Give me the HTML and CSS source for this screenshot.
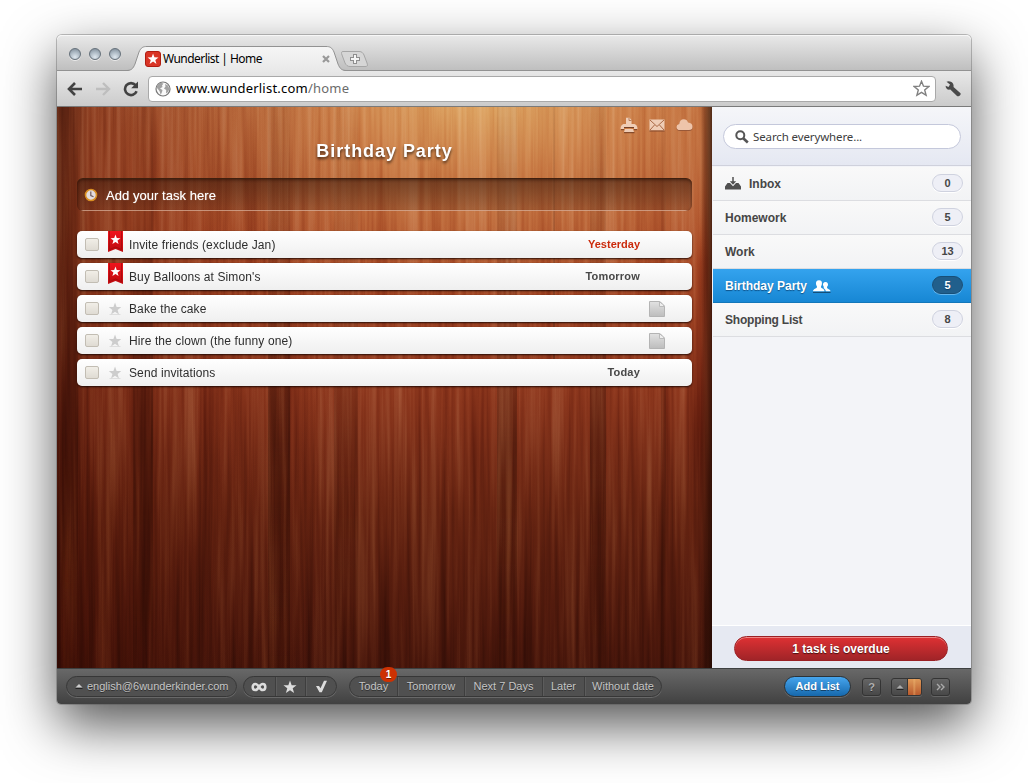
FILE: index.html
```html
<!DOCTYPE html>
<html lang="en">
<head>
<meta charset="utf-8">
<title>Wunderlist | Home</title>
<link rel="stylesheet" href="styles.css">
</head>
<body>
<svg class="defs" width="0" height="0" aria-hidden="true">
  <defs>
    <path id="star" d="M8 0.6 L9.9 5.9 L15.5 6.1 L11.1 9.5 L12.7 14.9 L8 11.7 L3.3 14.9 L4.9 9.5 L0.5 6.1 L6.1 5.9 Z"/>
    <linearGradient id="ribbonFill" x1="0" y1="0" x2="0" y2="1"><stop offset="0" stop-color="#f0141c"/><stop offset="1" stop-color="#bd0a0e"/></linearGradient>
    <linearGradient id="noteFill" x1="0" y1="0" x2="0" y2="1"><stop offset="0" stop-color="#e2e2e2"/><stop offset="1" stop-color="#bdbdbd"/></linearGradient>
    <linearGradient id="tabFill" x1="0" y1="0" x2="0" y2="1"><stop offset="0" stop-color="#f6f6f6"/><stop offset="1" stop-color="#e8e8e8"/></linearGradient>
    <linearGradient id="plankFade" gradientUnits="userSpaceOnUse" x1="0" y1="0" x2="0" y2="561"><stop offset="0" stop-color="#1c0400" stop-opacity=".1"/><stop offset=".25" stop-color="#1c0400" stop-opacity=".3"/><stop offset=".6" stop-color="#1c0400" stop-opacity=".9"/><stop offset="1" stop-color="#1c0400" stop-opacity=".4"/></linearGradient>
    <g id="ribbon">
      <path d="M0 0 H15 V21 L7.500 18 L0 21 Z" fill="url(#ribbonFill)"/>
      <path d="M1.500 0 V18.500 L7.500 16 L13.500 18.500 V0" fill="none" stroke="#98080a" stroke-opacity=".6" stroke-width="1"/>
      <use href="#star" transform="translate(2.200 3.200) scale(.66)" fill="#fff"/>
    </g>
    <g id="note">
      <path d="M.5 .5 H11 L15.500 5 V15.500 H.5 Z" fill="url(#noteFill)" stroke="#b4b4b4"/>
      <path d="M10.500 .5 V5.500 H15.500" fill="#eee" stroke="#bbb"/>
      <path d="M11 1 L15 5" stroke="#aaa" stroke-dasharray="1 1"/>
    </g>
    <g id="paleStar"><path d="M1.500 12.500 H12.500" stroke="#dedede"/><use href="#star" transform="translate(.3 0) scale(.84)" fill="#cdcdcd"/></g>
  </defs>
</svg>

<div class="window">
  <header class="titlebar">
    <div class="lights"><i class="light"></i><i class="light"></i><i class="light"></i></div>
    <div class="tab">
      <svg class="tab-shape" width="221" height="26" viewBox="0 0 221 26"><path d="M0 25 C5 25 7 23 9 18 L13 6 C15 1.500 17 .5 21 .5 H200 C204 .5 206 1.500 208 6 L212 18 C214 23 216 25 221 25 V26 H0 Z" fill="url(#tabFill)"/><path d="M0 24.500 C5 24.500 7 23 9 18 L13 6 C15 1.500 17 .5 21 .5 H200 C204 .5 206 1.500 208 6 L212 18 C214 23 216 24.500 221 24.500" fill="none" stroke="#929292"/></svg>
      <svg class="favicon" width="16" height="16" viewBox="0 0 16 16"><rect x=".5" y=".5" width="15" height="15" rx="2.500" fill="#d93526" stroke="#b01d12"/><use href="#star" transform="translate(2.200 2) scale(.73)" fill="#fff"/></svg>
      <span class="tab-title">Wunderlist | Home</span>
      <svg class="tab-close" width="8" height="8" viewBox="0 0 8 8"><path d="M1 1 L7 7 M7 1 L1 7" stroke="#999" stroke-width="2.200"/></svg>
    </div>
    <svg class="new-tab" width="28" height="17" viewBox="0 0 28 17"><path d="M2 .5 H18 C21 .5 22 2 23 4 L26 12 C27 15 26.500 15.500 24 15.500 H9 C6.500 15.500 5 14 4 12 L1 4 C0 1.500 .5 .5 2 .5 Z" fill="#d6d6d6" stroke="#a6a6a6"/><path d="M14 3 V13 M9 8 H19" stroke="#8f8f8f" stroke-width="4"/><path d="M14 4 V12 M10 8 H18" stroke="#f5f5f5" stroke-width="2"/></svg>
  </header>

  <nav class="toolbar">
    <svg class="nav-icon" width="16" height="14" viewBox="0 0 16 14"><path d="M8 1 L2 7 L8 13 M2.500 7 H15" fill="none" stroke="#424242" stroke-width="2.600"/></svg>
    <svg class="nav-icon" width="16" height="14" viewBox="0 0 16 14"><path d="M8 1 L14 7 L8 13 M13.500 7 H1" fill="none" stroke="#bebebe" stroke-width="2.400"/></svg>
    <svg class="nav-icon" width="16" height="16" viewBox="0 0 16 16"><path d="M12.600 4.200 A6 6 0 1 0 13.600 10.300" fill="none" stroke="#424242" stroke-width="2.600"/><path d="M15 .5 V7.300 H8.200 Z" fill="#424242"/></svg>
    <div class="address">
      <svg width="16" height="16" viewBox="0 0 16 16"><circle cx="8" cy="8" r="7" fill="#fafafa" stroke="#777" stroke-width="1.200"/><path d="M2 4 L5.500 1.800 L8.500 2.500 L7 4.500 L7.500 6 L5 7.500 L7.500 9 L7 11 L5.700 14 L4.500 10 L2 7 Z M10 3 L13 4.500 L14.500 8 L13 11 L11 12.500 L11.200 9 L9 7.500 L10.500 5.500 Z" fill="#a2a2a2"/></svg>
      <span class="url"><b>www.wunderlist.com</b>/home</span>
      <svg class="bookmark" width="17" height="17" viewBox="0 0 17 17"><path d="M8.500 1.300 L10.500 6.200 L15.800 6.500 L11.700 9.900 L13.100 15.300 L8.500 12.400 L3.900 15.300 L5.300 9.900 L1.200 6.500 L6.500 6.200 Z" fill="#fff" stroke="#808080" stroke-width="1.400"/></svg>
    </div>
    <svg class="wrench" width="17" height="16" viewBox="0 0 17 16"><path d="M1.500 .7 L5 3.500 L3.500 6 L.6 4.800 C.6 7.500 2.500 9.300 5.300 8.600 L12 15 C13.500 16 16.500 14 15.500 12.300 L8.500 6 C9.300 3 7 .3 3.600 .2" fill="#4a4a4a"/></svg>
  </nav>

  <div class="content">
    <main class="wood">
      <svg class="planks" width="655" height="561" fill="url(#plankFade)">
        <rect x="5" width="16" height="561" opacity=".5"/><rect x="76" width="18" height="561" opacity=".4"/><rect x="94" width="2" height="561" opacity=".7"/><rect x="211" width="22" height="561" opacity=".75"/><rect x="277" width="24" height="561" opacity=".35"/><rect x="440" width="20" height="561" opacity=".6"/><rect x="496" width="2" height="260"/><rect x="533" width="16" height="561" opacity=".7"/><rect x="604" width="5" height="561" opacity=".4"/>
      </svg>
      <svg class="grain" width="655" height="561">
        <filter id="broad" x="0" y="0" width="100%" height="100%" color-interpolation-filters="sRGB"><feTurbulence type="fractalNoise" baseFrequency=".05 .002" numOctaves="3" seed="12"/><feColorMatrix values="1.300 0 0 0 -.15  1.300 0 0 0 -.15  1.300 0 0 0 -.15  0 0 0 0 1"/></filter>
        <filter id="fine" x="0" y="0" width="100%" height="100%" color-interpolation-filters="sRGB"><feTurbulence type="fractalNoise" baseFrequency=".2 .005" numOctaves="3" seed="5"/><feColorMatrix values="1.300 0 0 0 -.15  1.300 0 0 0 -.15  1.300 0 0 0 -.15  0 0 0 0 1"/></filter>
        <rect class="grain-broad" width="655" height="561" filter="url(#broad)"/>
        <rect class="grain-fine" width="655" height="561" filter="url(#fine)"/>
      </svg>
      <div class="page">
        <div class="share">
          <svg width="18" height="17" viewBox="0 0 18 17"><path d="M6 7 V.8 H9.500 L11.500 3 V7 H14.500 Q17.500 8 17.500 12 H14 V10.500 H4 V12 H.5 Q.5 8 3.500 7 Z M5 12 H13 L14 15 H4 Z" fill="#efcdb6"/><path d="M4 15.700 H14.500 M1 12.700 H4 M14 12.700 H17 M4 10.500 H14" stroke="#754026"/><path d="M9 1 V3.500 H11.500" fill="none" stroke="#a86a46" stroke-width=".8"/></svg>
          <svg width="16" height="13" viewBox="0 0 16 13"><rect width="15" height="11" x=".5" y=".5" fill="#efcdb6"/><path d="M1 1 L8 7.500 L15 1 M1 11 L5.500 6 M15 11 L10.500 6" fill="none" stroke="#a96845"/><path d="M.5 12 H15.500" stroke="#84492c"/></svg>
          <svg width="17" height="13" viewBox="0 0 17 13"><path d="M4 12 Q.5 12 .5 8.700 Q.5 6.200 3.200 5.600 Q3.500 1 7.800 1 Q11 1 12 4.200 Q16.500 4.500 16.500 8.500 Q16.500 12 13 12 Z" fill="#985838"/><path d="M4 11 Q.5 11 .5 7.900 Q.5 5.500 3.200 5 Q3.700 .3 7.800 .3 Q11 .3 12 3.600 Q16.500 4 16.500 7.700 Q16.500 11 13 11 Z" fill="#eec4aa"/></svg>
        </div>
        <h1 class="list-title">Birthday Party</h1>
        <div class="add-task">
          <svg width="14" height="14" viewBox="0 0 14 14"><circle cx="7" cy="7" r="5.500" fill="#e2dcdf" stroke="#d98f22" stroke-width="1.600"/><path d="M6.800 3.500 V7.500 L9.500 8.700" fill="none" stroke="#6d5b5e" stroke-width="1.200"/></svg>
          <span>Add your task here</span>
        </div>
        <ul class="tasks">
          <li class="task"><i class="check"></i><svg class="ribbon" width="15" height="22"><use href="#ribbon"/></svg><span class="name">Invite friends (exclude Jan)</span><span class="due late">Yesterday</span></li>
          <li class="task"><i class="check"></i><svg class="ribbon" width="15" height="22"><use href="#ribbon"/></svg><span class="name">Buy Balloons at Simon's</span><span class="due">Tomorrow</span></li>
          <li class="task"><i class="check"></i><svg class="pale" width="15" height="14"><use href="#paleStar"/></svg><span class="name">Bake the cake</span><svg class="note" width="16" height="16"><use href="#note"/></svg></li>
          <li class="task"><i class="check"></i><svg class="pale" width="15" height="14"><use href="#paleStar"/></svg><span class="name">Hire the clown (the funny one)</span><svg class="note" width="16" height="16"><use href="#note"/></svg></li>
          <li class="task"><i class="check"></i><svg class="pale" width="15" height="14"><use href="#paleStar"/></svg><span class="name">Send invitations</span><span class="due">Today</span></li>
        </ul>
      </div>
    </main>

    <aside class="sidebar">
      <div class="search-area">
        <div class="search">
          <svg width="14" height="14" viewBox="0 0 14 14"><circle cx="5.300" cy="5.300" r="4" fill="none" stroke="#555" stroke-width="2"/><path d="M8.200 8.200 L12.800 12.500" stroke="#555" stroke-width="2.600"/></svg>
          <span>Search everywhere...</span>
        </div>
      </div>
      <ul class="lists">
        <li class="list"><svg class="inbox" width="16" height="14" viewBox="0 0 16 14"><path d="M2.500 6 H5 L8 9.300 L11 6 H13.500 L16 9.500 V12.500 H0 V9.500 Z" fill="#505050"/><path d="M8 0 V6" stroke="#505050" stroke-width="1.500"/><path d="M4.800 4.300 H11.200 L8 7.800 Z" fill="#505050"/></svg><span>Inbox</span><b class="count">0</b></li>
        <li class="list"><span>Homework</span><b class="count">5</b></li>
        <li class="list"><span>Work</span><b class="count">13</b></li>
        <li class="list selected"><span>Birthday Party</span><svg class="people" width="18" height="13" viewBox="0 0 18 13"><path d="M0 12.300 H17.500" stroke="#123e5f"/><path d="M6 .3 C8.500 .3 9.200 2 8.900 4 C8.700 5.500 8 6 8 7 C8 8.500 11.300 8.400 11.500 11.300 H0 C.3 8.500 4 8.500 4 7 C4 6 3.200 5.500 3 4 C2.800 1.800 3.700 .3 6 .3 Z M12.500 2 C14.500 2 15.200 3.500 15 5 C14.800 6.300 14 6.500 14 7.500 C14 9 17.300 9.200 17.500 11.300 H12.800 C12.500 9.500 11.300 8.500 10.500 8 C11.500 7.200 10.300 6.500 10 5 C9.800 3.500 10.500 2 12.500 2 Z" fill="#fff"/></svg><b class="count">5</b></li>
        <li class="list shopping"><span>Shopping List</span><b class="count">8</b></li>
      </ul>
      <div class="overdue-area"><div class="overdue">1 task is overdue</div></div>
    </aside>
  </div>

  <footer class="bottombar">
    <div class="group account"><svg width="8" height="5" viewBox="0 0 8 5"><path d="M4 0 L7.500 3.500 H.5 Z" fill="#ccc"/><path d="M.5 4.500 H7.500" stroke="#222"/></svg><span>english@6wunderkinder.com</span></div>
    <div class="group filters">
      <span class="cell"><svg width="16" height="10" viewBox="0 0 16 10"><path d="M8 5 C6.500 2.500 5.500 2 4.300 2 C.8 2 .8 8 4.300 8 C5.500 8 6.500 7.500 8 5 C9.500 2.500 10.500 2 11.700 2 C15.200 2 15.200 8 11.700 8 C10.500 8 9.500 7.500 8 5 Z" fill="none" stroke="#ddd" stroke-width="2.500"/></svg></span>
      <span class="cell"><svg width="14" height="14" viewBox="0 0 16 16"><use href="#star" fill="#ddd"/></svg></span>
      <span class="cell"><svg width="13" height="13" viewBox="0 0 13 13"><path d="M1 6 H4 L5.500 8.300 L9 .8 H12 L6.800 12.200 H4.500 Z" fill="#ddd"/></svg></span>
    </div>
    <div class="group dates">
      <span class="cell today">Today<b class="badge">1</b></span><span class="cell tomorrow">Tomorrow</span><span class="cell week">Next 7 Days</span><span class="cell later">Later</span><span class="cell none">Without date</span>
    </div>
    <div class="add-list">Add List</div>
    <div class="square help">?</div>
    <div class="square theme"><span class="arrow"><svg width="8" height="5" viewBox="0 0 8 5"><path d="M4 0 L7.500 3.500 H.5 Z" fill="#aaa"/><path d="M.5 4.500 H7.500" stroke="#222"/></svg></span><i class="swatch"></i></div>
    <div class="square more"><svg width="9" height="8" viewBox="0 0 9 8"><path d="M1 1 L4 4 L1 7 M5 1 L8 4 L5 7" fill="none" stroke="#aaa" stroke-width="1.400"/></svg></div>
  </footer>
</div>
</body>
</html>
```
FILE: styles.css
```css
* { box-sizing: border-box; }

body {
  margin: 0;
  width: 1028px;
  height: 783px;
  padding: 35px 57px;
  overflow: hidden;
  background: #fff;
  font-family: "Liberation Sans", Arial, sans-serif;
  font-size: 12px;
}

svg { display: block; flex: none; }
ul { margin: 0; padding: 0; list-style: none; }
.defs { position: absolute; }

.window {
  display: flex;
  flex-direction: column;
  width: 914px;
  height: 669px;
  border-radius: 5px 5px 4px 4px;
  box-shadow: 0 0 0 1px rgba(80, 80, 80, .35), 0 21px 54px rgba(0, 0, 0, .68);
}

/* Browser chrome */
.titlebar {
  display: flex;
  height: 36px;
  padding-left: 12px;
  border-radius: 5px 5px 0 0;
  border-bottom: 1px solid #929292;
  background: linear-gradient(#e9e9e9, #bfbfbf);
  box-shadow: inset 0 1px #f7f7f7;
}
.lights { display: flex; gap: 8px; width: 57px; padding-top: 13px; }
.light {
  width: 12px;
  height: 12px;
  border: 1px solid #66717b;
  border-radius: 50%;
  background: radial-gradient(circle at 50% 80%, #dfe8ef 0, #a9b6c1 55%, #76838f 100%);
  box-shadow: 0 1px rgba(255, 255, 255, .6);
}
.tab {
  position: relative;
  display: flex;
  align-items: center;
  width: 221px;
  height: 26px;
  margin: 11px 0 -1px;
  padding: 0 0 0 19px;
}
.tab-shape { position: absolute; left: 0; top: 0; }
.favicon, .tab-title, .tab-close { position: relative; }
.tab-title {
  flex: 1;
  margin-left: 2px;
  font: 12px/16px "Noto Sans", sans-serif;
  letter-spacing: -.55px;
  color: #000;
}
.tab-close { margin-right: 17px; }
.new-tab { margin: 16px 0 0 -6px; }

.toolbar {
  display: flex;
  align-items: center;
  height: 36px;
  padding: 0 9px 0 10px;
  border-bottom: 1px solid #7a7a7a;
  background: linear-gradient(#e8e8e8, #cbcbcb);
}
.nav-icon { margin-right: 12px; }
.address {
  display: flex;
  align-items: center;
  width: 788px;
  height: 26px;
  margin-left: -3px;
  padding: 0 5px 0 6px;
  border: 1px solid #a9a9a9;
  border-radius: 4px;
  background: #fff;
}
.url {
  flex: 1;
  margin: -2px 0 0 5px;
  font: 13px/18px "Noto Sans", sans-serif;
  letter-spacing: .22px;
  color: #6b6b6b;
}
.url b { font-weight: 400; color: #000; }
.wrench { margin-left: 9px; }

/* Task area */
.content { display: flex; height: 561px; }
.wood {
  position: relative;
  width: 655px;
  isolation: isolate;
  background:
    linear-gradient(90deg, rgba(40, 4, 0, .62) 0, rgba(60, 8, 0, .3) 5%, rgba(60, 8, 0, .12) 22%, transparent 45%),
    radial-gradient(ellipse 370px 225px at 425px -25px, rgba(232, 186, 114, .9) 0, rgba(218, 150, 88, .65) 42%, transparent 100%),
    linear-gradient(#b45a32 0, #a94a26 25%, #923a1f 48%, #682512 72%, #48160b 100%);
}
.wood::after {
  content: "";
  position: absolute;
  top: 0;
  right: 0;
  width: 12px;
  height: 561px;
  background: linear-gradient(90deg, transparent, rgba(20, 5, 0, .65));
}
.planks { position: absolute; inset: 0; opacity: .5; }
.grain { position: absolute; inset: 0; mix-blend-mode: soft-light; }
.grain-broad { opacity: .45; }
.grain-fine { opacity: .32; }
.page { position: relative; padding: 9px 19px 0 20px; }
.share { display: flex; justify-content: flex-end; align-items: center; gap: 11px; height: 18px; }
.list-title {
  margin: 5px 1px 0 0;
  height: 24px;
  text-align: center;
  font-size: 18px;
  line-height: 24px;
  letter-spacing: .95px;
  color: #fff;
  text-shadow: 0 2px 3px rgba(0, 0, 0, .65);
}
.add-task {
  display: flex;
  align-items: center;
  gap: 8px;
  height: 33px;
  margin: 15px 1px 0 0;
  padding: 0 0 0 7px;
  border-radius: 6px;
  border-top: 1px solid #40200f;
  background: linear-gradient(to right, transparent 3px, rgba(255, 210, 185, .65) 6px, rgba(255, 210, 185, .65) 608px, transparent 612px) 0 100% / 100% 1px no-repeat, linear-gradient(rgba(60, 25, 12, .6), rgba(70, 30, 15, .24));
  box-shadow: inset 0 1px 3px rgba(25, 8, 0, .5);
  font-size: 13px;
  letter-spacing: .05px;
  color: #fff;
  text-shadow: 0 0 1px rgba(255, 255, 255, .6);
}
.tasks { display: grid; gap: 5px; margin: 20px 1px 0 0; }
.task {
  display: flex;
  align-items: center;
  height: 27px;
  padding: 0 52px 0 8px;
  border-radius: 5px;
  background: linear-gradient(#fff, #efefef);
  box-shadow: 0 1px 2px rgba(20, 5, 0, .85);
  color: #2d2d2d;
}
.check {
  width: 14px;
  height: 13px;
  border: 1px solid #c2bdb3;
  border-radius: 2px;
  background: linear-gradient(#f1eee7, #dfdbd3);
}
.ribbon { align-self: flex-start; margin-left: 9px; }
.pale { margin: 1px 0 0 9px; }
.name { flex: 1; margin-left: 6px; letter-spacing: .11px; }
.due { margin-top: -1px; font-size: 11px; font-weight: 700; letter-spacing: .2px; color: #484848; }
.due.late { letter-spacing: 0; color: #cb2a0b; }
.note { margin-right: -25px; }

/* Sidebar */
.sidebar {
  display: flex;
  flex-direction: column;
  width: 259px;
  background: #f3f4f8;
  color: #464646;
  font-weight: 700;
}
.search-area {
  height: 59px;
  padding: 17px 10px 0 11px;
  border-bottom: 1px solid #cfd1dc;
  background: linear-gradient(#f5f6f9, #e5e8f2);
}
.search {
  display: flex;
  align-items: center;
  gap: 4px;
  height: 25px;
  padding-left: 11px;
  border: 1px solid #c4c8db;
  border-radius: 13px;
  background: #fff;
  font: 11.500px/16px "Noto Sans", sans-serif;
  letter-spacing: -.12px;
  color: #404040;
}
.lists { flex: 1; padding: 1px 0 0 1px; }
.list {
  display: flex;
  align-items: center;
  height: 34px;
  padding: 0 8px 0 12px;
  border-bottom: 1px solid #dcdde1;
  background: linear-gradient(#f9f9f9, #f2f3f5);
}
.shopping span { letter-spacing: -.2px; }
.inbox { margin-right: 8px; }
.people { margin: 1px 0 0 6px; }
.count {
  width: 31px;
  height: 18px;
  margin: -2px 0 0 auto;
  border: 1px solid #cfd2df;
  border-radius: 9px;
  background: #eeeff6;
  box-shadow: 0 1px #fff;
  text-align: center;
  font-size: 11px;
  line-height: 16px;
}
.selected {
  border-color: #1377b9;
  background: linear-gradient(#34a3ee, #1787d4);
  color: #fff;
  text-shadow: 0 1px 1px rgba(0, 40, 80, .6);
}
.selected .count { margin-top: -1px; border-color: #174f78; background: #215f8c; box-shadow: 0 1px #62b4ec; }
.overdue-area { height: 43px; padding: 10px 23px 0 22px; border-top: 1px solid #fff; background: #e6e9f2; }
.overdue {
  height: 25px;
  border: 1px solid #9b2024;
  border-radius: 13px;
  background: linear-gradient(#df3133, #a02428);
  box-shadow: inset 0 1px #ee8584;
  text-align: center;
  line-height: 24px;
  color: #fff;
  text-shadow: 0 1px 1px rgba(0, 0, 0, .6);
}

/* Bottom bar */
.bottombar {
  display: flex;
  align-items: flex-start;
  height: 36px;
  padding: 7px 21px 0 9px;
  border-top: 1px solid #3e4041;
  border-radius: 0 0 4px 4px;
  background: linear-gradient(#686868, #414141);
  color: #c5c5c5;
  font-size: 11px;
  text-shadow: 0 1px rgba(0, 0, 0, .45);
}
.group {
  display: flex;
  height: 21px;
  border: 1px solid #373737;
  border-radius: 11px;
  background: #505050;
  box-shadow: 0 1px #686868;
  line-height: 18px;
}
.account { align-items: center; gap: 4px; width: 171px; padding-left: 8px; }
.account span { margin-top: -1px; }
.filters { width: 94px; margin-left: 6px; }
.cell { position: relative; display: flex; justify-content: center; align-items: center; border-left: 1px solid #3e3e3e; box-shadow: inset 1px 0 #5c5c5c; }
.cell:first-child { border-left: 0; box-shadow: none; }
.filters .cell { width: 31px; }
.dates { width: 313px; margin-left: 12px; }
.dates .cell { padding-bottom: 1px; }
.today { width: 47px; }
.tomorrow { width: 67px; }
.week { width: 78px; }
.later { width: 42px; }
.none { width: 77px; }
.badge {
  position: absolute;
  left: 30px;
  top: -10px;
  width: 17px;
  height: 15px;
  border-radius: 8px;
  background: #cd3102;
  text-align: center;
  font-size: 10px;
  line-height: 15px;
  color: #fff;
}
.add-list {
  width: 67px;
  height: 21px;
  margin-left: auto;
  border: 1px solid #2b3339;
  border-radius: 11px;
  background: linear-gradient(#46a5ee, #1668ac);
  box-shadow: 0 1px #6c6c6c;
  text-align: center;
  font-weight: 700;
  line-height: 19px;
  color: #fff;
}
.square {
  display: flex;
  justify-content: center;
  align-items: center;
  width: 19px;
  height: 18px;
  margin-top: 2px;
  border: 1px solid #343434;
  border-radius: 3px;
  background: linear-gradient(#656565, #484848);
  box-shadow: 0 1px #656565;
  color: #b0b0b0;
  font-weight: 700;
}
.help { margin-left: 11px; }
.theme { width: 31px; margin-left: 10px; }
.arrow { display: flex; flex: 1; justify-content: center; }
.swatch { width: 14px; height: 16px; border-left: 1px solid #333; border-radius: 0 2px 2px 0; background: linear-gradient(90deg, transparent 5px, rgba(240, 190, 120, .5) 6px, transparent 8px), linear-gradient(#df9a59, #b95a2d); }
.more { margin-left: 9px; }
```
